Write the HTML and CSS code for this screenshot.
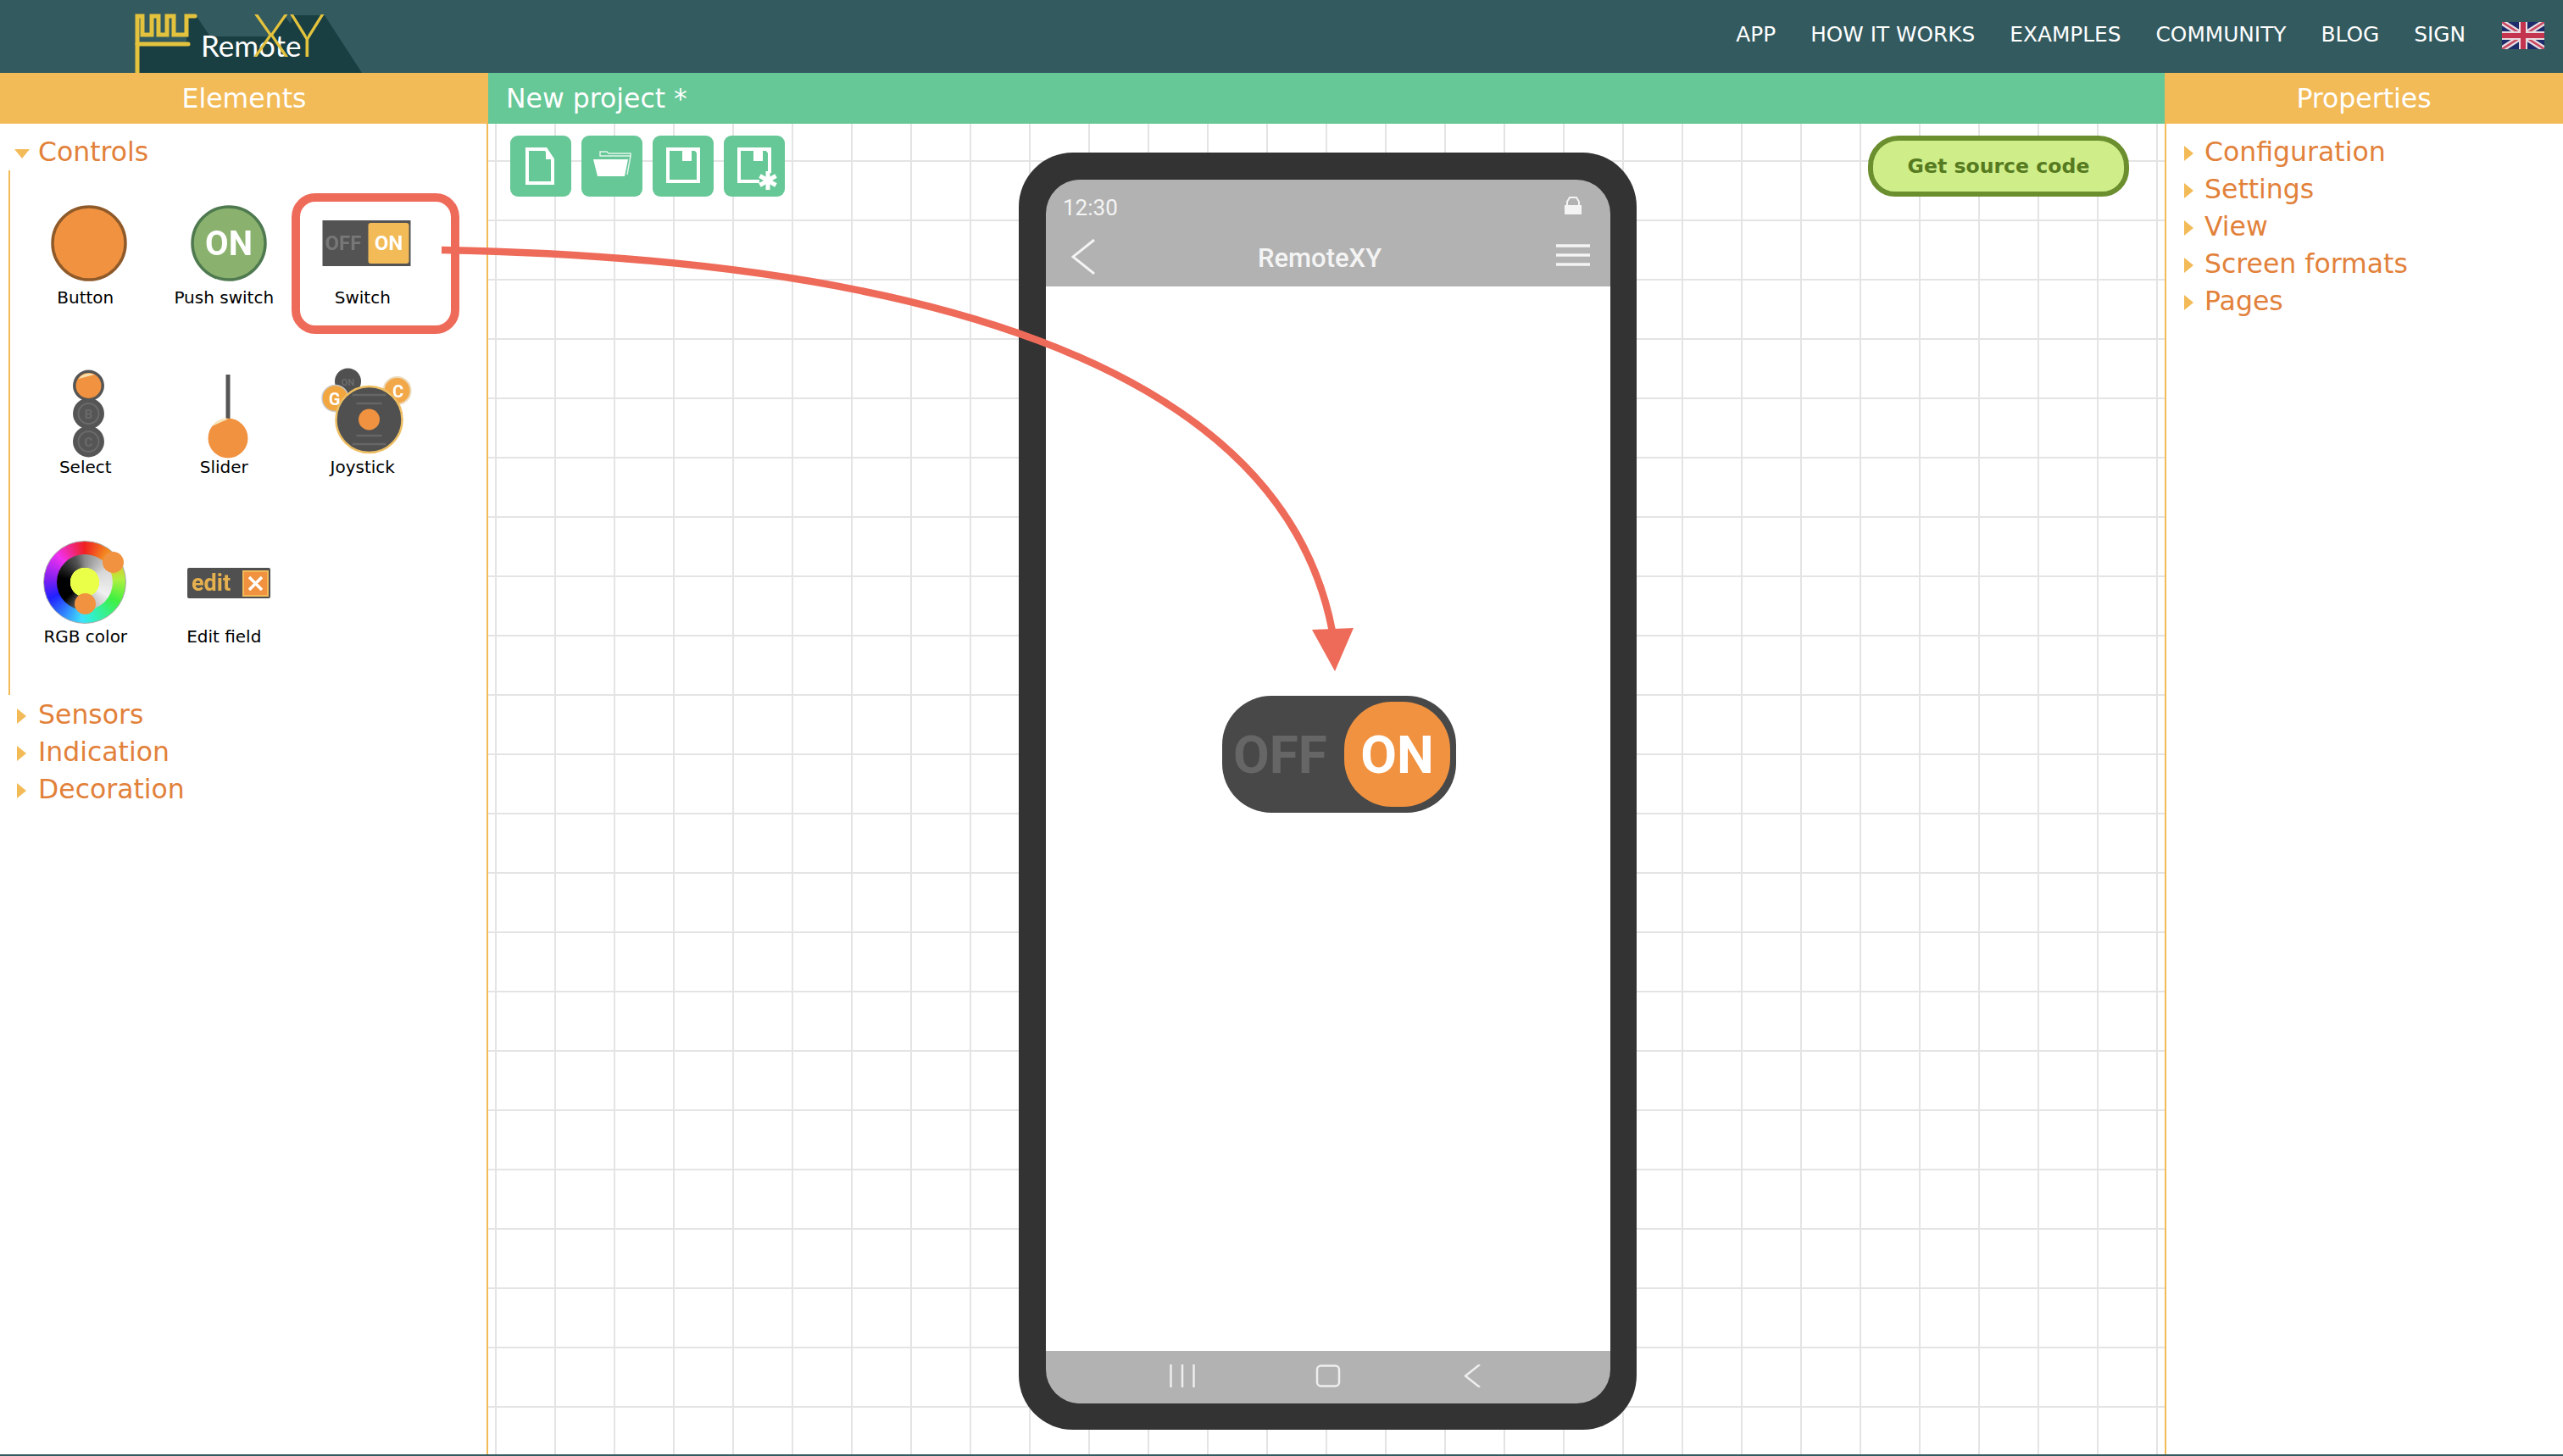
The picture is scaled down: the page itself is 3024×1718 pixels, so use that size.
FILE: index.html
```html
<!DOCTYPE html>
<html lang="en">
<head>
<meta charset="utf-8">
<title>RemoteXY</title>
<link rel="stylesheet" href="styles.css">
</head>
<body>
<header class="topbar">
  <svg class="logo" viewBox="140 0 300 86" aria-label="RemoteXY logo">
    <polygon class="logo-shade" points="163,86 163,52 220,52 220,19 231,18 248,43 317,43 335,18 343,28 345,18 383,18 427,86"/>
    <polyline class="logo-line" points="162,86 162,19 168,19 168,41 179,41 179,19 187,19 187,41 197,41 197,19 205,19 205,41 220,41 220,19 230,19"/>
    <line class="logo-line" x1="162" y1="52" x2="222" y2="52"/>
    <text class="logo-remote" x="237" y="67">Remote</text>
    <text class="logo-xy" x="298" y="67">XY</text>
  </svg>
  <nav class="nav">
    <a>APP</a><a>HOW IT WORKS</a><a>EXAMPLES</a><a>COMMUNITY</a><a>BLOG</a><a>SIGN</a>
    <svg class="flag" viewBox="0 0 50 32" aria-label="English">
      <rect width="50" height="32" fill="#1d2c6b"/>
      <path d="M0 0 50 32M50 0 0 32" stroke="#e8dce0" stroke-width="7"/>
      <path d="M0 0 50 32M50 0 0 32" stroke="#c8455f" stroke-width="2.5"/>
      <path d="M25 0V32M0 16H50" stroke="#e8dce0" stroke-width="10"/>
      <path d="M25 0V32M0 16H50" stroke="#c4344f" stroke-width="6"/>
    </svg>
  </nav>
</header>

<main class="workspace">
  <aside class="side side-left">
    <div class="band band-orange">Elements</div>
    <div class="list">
      <div class="group"><i class="tri tri-down"></i>Controls</div>
      <div class="tiles">
        <div class="tile">
          <svg class="tile-icon" viewBox="18.5 220 163.5 119">
            <circle cx="104.5" cy="287" r="43" fill="#f09240" stroke="#8f5a2a" stroke-width="3.5"/>
          </svg>
          <span class="tile-label">Button</span>
        </div>
        <div class="tile">
          <svg class="tile-icon" viewBox="182 220 163.5 119">
            <circle cx="269" cy="287" r="43" fill="#8ab26e" stroke="#4f7a50" stroke-width="3.5"/>
            <text class="icon-bold icon-white" x="269" y="301" font-size="40" text-anchor="middle">ON</text>
          </svg>
          <span class="tile-label">Push switch</span>
        </div>
        <div class="tile tile-picked">
          <svg class="tile-icon" viewBox="345.5 220 163.5 119">
            <rect x="380" y="260" width="104" height="54" fill="#535353"/>
            <rect x="434" y="263" width="48" height="48" rx="3" fill="#f2bb58"/>
            <text class="icon-bold" x="383" y="295" font-size="24" fill="#777">OFF</text>
            <text class="icon-bold icon-white" x="458" y="295" font-size="24" text-anchor="middle">ON</text>
          </svg>
          <span class="tile-label">Switch</span>
        </div>

        <div class="tile">
          <svg class="tile-icon" viewBox="18.5 420 163.5 119">
            <circle cx="104" cy="521" r="18.5" fill="#555"/>
            <circle cx="104" cy="521" r="12" fill="none" stroke="#6a6a6a" stroke-width="2"/>
            <text class="icon-bold" x="104" y="527" font-size="15" fill="#6a6a6a" text-anchor="middle">C</text>
            <circle cx="104" cy="488" r="18.5" fill="#555"/>
            <circle cx="104" cy="488" r="12" fill="none" stroke="#6a6a6a" stroke-width="2"/>
            <text class="icon-bold" x="104" y="494" font-size="15" fill="#6a6a6a" text-anchor="middle">B</text>
            <circle cx="104" cy="455" r="18.5" fill="#555"/>
            <circle cx="104" cy="455" r="15" fill="#f09240"/>
            <path d="M92 447a15 15 0 0 1 19-5z" fill="#f8dfae"/>
          </svg>
          <span class="tile-label">Select</span>
        </div>
        <div class="tile">
          <svg class="tile-icon" viewBox="182 420 163.5 119">
            <line x1="268" y1="442" x2="268" y2="496" stroke="#555" stroke-width="5"/>
            <circle cx="268" cy="517" r="23.5" fill="#f09240"/>
            <path d="M249 503a23.5 23.5 0 0 1 17-9.500l2 1z" fill="#f8e6bd"/>
          </svg>
          <span class="tile-label">Slider</span>
        </div>
        <div class="tile">
          <svg class="tile-icon" viewBox="345.5 420 163.5 119">
            <circle cx="410" cy="450" r="15.500" fill="#505050"/>
            <text class="icon-bold" x="410" y="455" font-size="11" fill="#6c6c6c" text-anchor="middle">ON</text>
            <circle cx="395" cy="470" r="15.500" fill="#f2a63f" stroke="#c9c9c9" stroke-width="1.500"/>
            <text class="icon-bold icon-white" x="394" y="478" font-size="20" text-anchor="middle">G</text>
            <circle cx="468" cy="461" r="16" fill="#f2a748" stroke="#ecd9b8" stroke-width="2"/>
            <text class="icon-bold icon-white" x="469" y="469" font-size="20" text-anchor="middle">C</text>
            <circle cx="435" cy="495" r="39" fill="#505050" stroke="#edbe62" stroke-width="2.500"/>
            <path d="M415 466h40M420 476h30M420 514h30M415 524h40" stroke="#666" stroke-width="2.500"/>
            <circle cx="435" cy="495" r="12.500" fill="#f09240"/>
          </svg>
          <span class="tile-label">Joystick</span>
        </div>

        <div class="tile">
          <div class="rgb">
            <div class="rgb-ring"></div>
            <div class="rgb-core"></div>
            <div class="rgb-knob rgb-knob-a"></div>
            <div class="rgb-knob rgb-knob-b"></div>
          </div>
          <span class="tile-label">RGB color</span>
        </div>
        <div class="tile">
          <svg class="tile-icon" viewBox="182 620 163.5 119">
            <rect x="220" y="670" width="98" height="36" rx="2" fill="#505050"/>
            <text class="icon-bold" x="225" y="697" font-size="27" fill="#e5b04e">edit</text>
            <rect x="286" y="674" width="29" height="29" fill="#f09240" stroke="#f2bb58" stroke-width="2"/>
            <path d="M293 681l15 15M308 681l-15 15" stroke="#fff" stroke-width="3.500"/>
          </svg>
          <span class="tile-label">Edit field</span>
        </div>
      </div>
      <div class="group group-sep"><i class="tri"></i>Sensors</div>
      <div class="group"><i class="tri"></i>Indication</div>
      <div class="group"><i class="tri"></i>Decoration</div>
    </div>
  </aside>

  <section class="center">
    <div class="band band-green">New project *</div>
    <div class="canvas">
      <div class="tools">
        <button class="tool" aria-label="New">
          <svg viewBox="0 0 72 72"><path class="tool-line" d="M20 16H42L50 28V56H20Z"/><path d="M42 14 52 28H42Z" class="tool-fill"/></svg>
        </button>
        <button class="tool" aria-label="Open">
          <svg viewBox="0 0 72 72"><path class="tool-fill" d="M14 28H55L51 48H19Z"/><path class="tool-thin" d="M22 24H58V21H32L30 19H22ZM58 24 54 46"/></svg>
        </button>
        <button class="tool" aria-label="Save">
          <svg viewBox="0 0 72 72"><path class="tool-line" d="M18 16H51L54 20V54H18Z"/><rect class="tool-fill" x="36" y="14" width="4" height="3"/><path class="tool-fill" d="M16 14H56V20H53V18H46V30H35V18H19V16H16Z"/></svg>
        </button>
        <button class="tool" aria-label="Save as">
          <svg viewBox="0 0 72 72"><path class="tool-line" d="M18 16H51L54 20V44M42 54H18V16"/><path class="tool-fill" d="M16 14H56V20H53V18H46V30H35V18H19V16H16Z"/><path class="tool-star" d="M52 42V64M42.500 47.500 61.500 58.500M61.500 47.500 42.500 58.500"/></svg>
        </button>
      </div>

      <div class="phone">
        <div class="phone-head">
          <div class="status">
            <span class="clock">12:30</span>
            <svg class="lock" viewBox="0 0 20 21"><path d="M0 10H20V21H0Z" fill="#f4f4f4"/><path d="M3 10V6L6 1H14L17 6V10" fill="none" stroke="#f4f4f4" stroke-width="2"/></svg>
          </div>
          <div class="appbar">
            <svg class="app-back" viewBox="0 0 28 42"><path d="M27 1 2 21 27 41" fill="none" stroke="#f4f4f4" stroke-width="3"/></svg>
            <span class="app-title">RemoteXY</span>
            <svg class="app-menu" viewBox="0 0 40 26"><path d="M0 2H40M0 13H40M0 24H40" stroke="#f4f4f4" stroke-width="3.500"/></svg>
          </div>
        </div>
        <div class="phone-screen">
          <div class="big-switch">
            <span class="big-off">OFF</span>
            <span class="big-on">ON</span>
          </div>
        </div>
        <div class="phone-foot">
          <svg class="foot-icon" viewBox="0 0 30 27"><path d="M1.500 0V27M15 0V27M28.500 0V27" stroke="#eee" stroke-width="2.500"/></svg>
          <svg class="foot-icon" viewBox="0 0 30 27"><rect x="2" y="1.500" width="26" height="24" rx="4.500" fill="none" stroke="#eee" stroke-width="2.500"/></svg>
          <svg class="foot-icon" viewBox="0 0 30 27"><path d="M22 0 5 13.500 22 27" fill="none" stroke="#eee" stroke-width="2.500"/></svg>
        </div>
      </div>

      <button class="get-code">Get source code</button>
    </div>
  </section>

  <aside class="side side-right">
    <div class="band band-orange">Properties</div>
    <div class="list list-right">
      <div class="group"><i class="tri"></i>Configuration</div>
      <div class="group"><i class="tri"></i>Settings</div>
      <div class="group"><i class="tri"></i>View</div>
      <div class="group"><i class="tri"></i>Screen formats</div>
      <div class="group"><i class="tri"></i>Pages</div>
    </div>
  </aside>
</main>

<svg class="arrow" viewBox="0 0 3024 1718" aria-hidden="true">
  <path class="arrow-line" d="M521 295C1060 305 1510 420 1572 745"/>
  <polygon class="arrow-head" points="1548,743 1597,741 1575,792"/>
</svg>
</body>
</html>
```
FILE: styles.css
```css
* { box-sizing: border-box; }

html, body {
  margin: 0;
  padding: 0;
}

body {
  position: relative;
  width: 3024px;
  height: 1718px;
  overflow: hidden;
  background: #335a5f;
  font-family: "DejaVu Sans", Verdana, sans-serif;
}

/* top bar */
.topbar {
  display: flex;
  height: 86px;
  background: #335a5f;
}

.logo {
  display: block;
  width: 300px;
  height: 86px;
  margin-left: 140px;
}

.logo-shade { fill: #193f42; }

.logo-line {
  fill: none;
  stroke: #e3c23d;
  stroke-width: 5;
  stroke-linecap: round;
}

.logo-remote {
  font-family: Lato, sans-serif;
  font-size: 35px;
  fill: #fff;
}

.logo-xy {
  font-family: Lato, sans-serif;
  font-size: 70px;
  font-weight: 300;
  fill: #e3c23d;
}

.nav {
  display: flex;
  align-items: flex-start;
  gap: 41px;
  margin-left: auto;
  padding: 26px 22px 0 0;
  color: #fff;
  font-size: 24.8px;
  line-height: 30px;
}

.flag {
  display: block;
  width: 50px;
  height: 32px;
  margin-left: 2px;
  filter: blur(.7px);
}

/* workspace */
.workspace {
  display: flex;
  height: 1630px;
  background: #fff;
}

.side {
  flex: none;
  background: #fff;
}

.side-left {
  width: 576px;
  border-right: 2px solid #f2bb58;
}

.side-right {
  width: 470px;
  border-left: 2px solid #f2bb58;
}

.center {
  flex: 1;
  min-width: 0;
}

.band {
  height: 60px;
  color: #fff;
  font-size: 31.5px;
  line-height: 60px;
  text-align: center;
}

.band-orange { background: #f2bb58; }

.side-left .band { margin-right: -2px; }

.side-right .band { margin-left: -2px; }

.band-green {
  padding-left: 21px;
  background: #66c797;
  text-align: left;
}

/* element lists */
.list { padding-top: 11px; }

.group {
  display: flex;
  align-items: flex-start;
  height: 44px;
  padding-left: 20px;
  color: #e2813a;
  font-size: 31.5px;
  line-height: 44px;
  white-space: nowrap;
}

.group-sep { margin-top: 1px; }

.list-right .group { padding-left: 21px; }

.list-right .tri { margin-right: 13px; }

.tri {
  flex: none;
  width: 0;
  height: 0;
  margin: 15px 14px 0 0;
  border-top: 9.5px solid transparent;
  border-bottom: 9.5px solid transparent;
  border-left: 11px solid #f2bb58;
}

.tri-down {
  margin: 19px 10px 0 -3px;
  border-top: 11px solid #f2bb58;
  border-bottom: 0;
  border-right: 9.5px solid transparent;
  border-left: 9.5px solid transparent;
}

.tiles {
  display: grid;
  grid-template-columns: repeat(3, 163.5px);
  grid-auto-rows: 200px;
  align-content: start;
  width: 510px;
  height: 619px;
  margin-left: 10px;
  padding: 19px 0 0 7px;
  border-left: 2px solid #f2bb58;
}

.tile {
  position: relative;
  display: flex;
  flex-direction: column;
  align-items: center;
}

.tile-icon {
  display: block;
  flex: none;
  width: 163.5px;
  height: 119px;
  overflow: visible;
  filter: blur(.6px);
}

.tile-label {
  color: #000;
  font-size: 20px;
  line-height: 24px;
  white-space: nowrap;
}

.tile-picked::after {
  content: "";
  position: absolute;
  top: 8px;
  left: -2px;
  width: 178px;
  height: 146px;
  border: 10px solid #ee6b5a;
  border-radius: 28px;
}

.icon-bold {
  font-family: Roboto, sans-serif;
  font-weight: 700;
}

.icon-white { fill: #fff; }

/* RGB colour wheel */
.rgb {
  position: relative;
  flex: none;
  width: 98px;
  height: 119px;
  margin-left: -1px;
  margin-top: 0;
  filter: blur(.6px);
}

.rgb-ring {
  position: absolute;
  top: 18px;
  left: 0;
  width: 98px;
  height: 98px;
  border-radius: 50%;
  background:
    radial-gradient(circle, transparent 0 33px, rgba(0,0,0,0) 33px),
    conic-gradient(#f02020, #f4b020 50deg, #b0f040 85deg, #40f040 120deg, #30f0d0 170deg, #40e0ff 185deg, #2020ff 245deg, #8020f0 275deg, #f030f0 315deg, #f02020);
  border: 1px solid #a8a8a8;
}

.rgb-core {
  position: absolute;
  top: 34px;
  left: 16px;
  width: 66px;
  height: 66px;
  border-radius: 50%;
  background:
    radial-gradient(circle, #e9ff48 0 17px, transparent 17.500px),
    conic-gradient(#8a8a8a, #d8d8d8 60deg, #f0f0f0 120deg, #b0b0b0 170deg, #000 230deg, #000 280deg, #555 340deg, #8a8a8a);
}

.rgb-knob {
  position: absolute;
  width: 25px;
  height: 25px;
  border-radius: 50%;
  background: #f09240;
}

.rgb-knob-a { top: 31px; left: 70px; }

.rgb-knob-b { top: 80px; left: 37px; }

/* canvas */
.canvas {
  display: flex;
  align-items: flex-start;
  height: 1570px;
  padding: 14px 42px 0 26px;
  overflow: hidden;
  background-color: #fff;
  background-image:
    linear-gradient(#e4e4e4 2px, transparent 2px),
    linear-gradient(90deg, #e4e4e4 2px, transparent 2px);
  background-size: 70px 70px;
  background-position: 0 43px, 8px 0;
}

.tools {
  display: flex;
  flex: none;
  gap: 12px;
}

.tool {
  display: block;
  width: 72px;
  height: 72px;
  padding: 0;
  border: 0;
  border-radius: 9px;
  background: #66c797;
}

.tool svg {
  display: block;
  width: 72px;
  height: 72px;
}

.tool-line {
  fill: none;
  stroke: #fff;
  stroke-width: 4;
}

.tool-thin {
  fill: none;
  stroke: #fff;
  stroke-width: 1.500;
  opacity: .8;
}

.tool-fill { fill: #fff; }

.tool-star {
  fill: none;
  stroke: #fff;
  stroke-width: 5;
}

/* phone */
.phone {
  display: flex;
  flex: none;
  flex-direction: column;
  width: 729px;
  height: 1507px;
  margin: 20px 0 0 276px;
  padding: 32px 31px 31px 32px;
  border-radius: 64px;
  background: #333;
}

.phone-head {
  flex: none;
  height: 126px;
  border-radius: 40px 40px 0 0;
  background: #b2b2b2;
  color: #f4f4f4;
  font-family: Roboto, sans-serif;
}

.status {
  display: flex;
  justify-content: space-between;
  align-items: flex-start;
  height: 60px;
  padding: 18px 34px 0 20px;
}

.clock {
  font-size: 26px;
  line-height: 30px;
}

.lock {
  display: block;
  width: 20px;
  height: 21px;
  margin-top: 2px;
}

.appbar {
  position: relative;
  display: flex;
  justify-content: space-between;
  align-items: center;
  height: 66px;
  padding: 0 24px 0 30px;
}

.app-back {
  display: block;
  width: 28px;
  height: 42px;
  margin-top: -4px;
}

.app-title {
  font-size: 31px;
  font-weight: 500;
  line-height: 40px;
  margin: 0 0 0 -14px;
}

.app-menu {
  display: block;
  width: 40px;
  height: 26px;
  margin-top: -8px;
}

.phone-screen {
  flex: 1;
  padding: 483px 0 0 208px;
  background: #fff;
}

.big-switch {
  display: flex;
  align-items: center;
  width: 276px;
  height: 138px;
  padding: 0 7px 0 13px;
  border-radius: 58px;
  background: #484848;
  font-family: Roboto, sans-serif;
  font-size: 62px;
  font-weight: 700;
  filter: blur(.5px);
}

.big-off {
  color: #666;
}

.big-on {
  display: flex;
  align-items: center;
  justify-content: center;
  width: 125px;
  height: 124px;
  margin-left: auto;
  border-radius: 56px;
  background: #f09240;
  color: #fff;
}

.phone-foot {
  display: flex;
  flex: none;
  justify-content: center;
  align-items: center;
  gap: 142px;
  height: 62px;
  padding-bottom: 4px;
  border-radius: 0 0 40px 40px;
  background: #b2b2b2;
}

.foot-icon {
  display: block;
  width: 30px;
  height: 27px;
}

/* source-code button */
.get-code {
  flex: none;
  width: 308px;
  height: 72px;
  margin-left: auto;
  padding: 0;
  border: 6px solid #6b8f2e;
  border-radius: 36px 36px 32px 32px;
  background: #cfee8a;
  color: #567a1f;
  font-family: "DejaVu Sans", Verdana, sans-serif;
  font-size: 23.6px;
  font-weight: 700;
}

/* annotation arrow */
.arrow {
  position: absolute;
  top: 0;
  left: 0;
  width: 3024px;
  height: 1718px;
  pointer-events: none;
}

.arrow-line {
  fill: none;
  stroke: #ee6b5a;
  stroke-width: 8.5;
}

.arrow-head { fill: #ee6b5a; }
```
